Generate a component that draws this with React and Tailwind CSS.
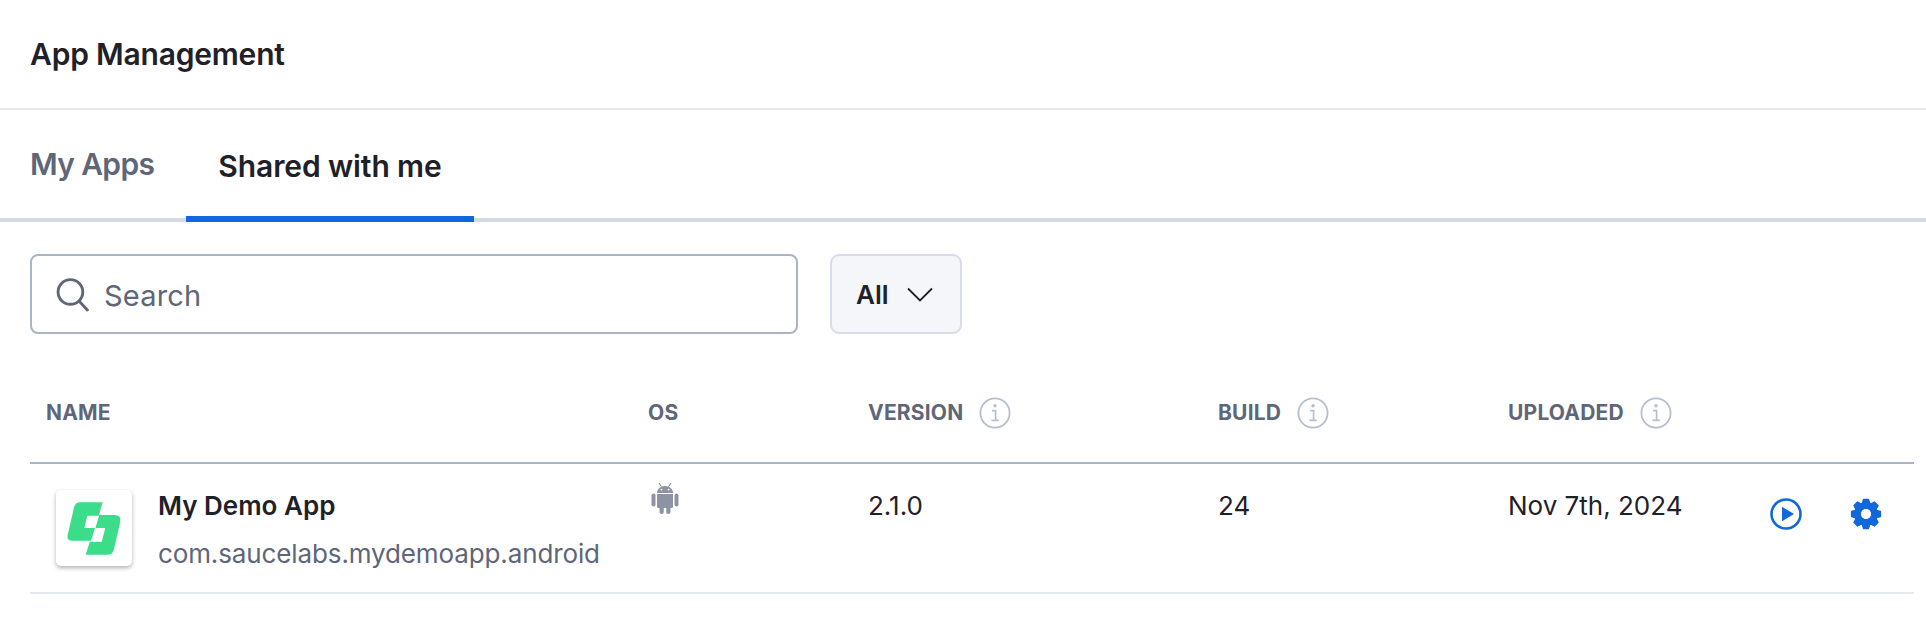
import React from "react";

const cols = "grid grid-cols-[602px_220px_350px_290px_1fr]";

function Info() {
  return (
    <svg width="32" height="32" viewBox="0 0 32 32" fill="none" className="shrink-0">
      <circle cx="16" cy="16" r="14.6" stroke="#b4bfcf" strokeWidth="1.8" />
      <circle cx="16" cy="8.8" r="1.7" fill="#b4bfcf" />
      <path d="M13 13.6h3.6v9.6M12.4 23.4h7.4" stroke="#b4bfcf" strokeWidth="1.7" />
    </svg>
  );
}

function Android() {
  return (
    <svg width="28" height="32" viewBox="0 0 28 32" fill="#8d93a3" className="block">
      <path d="M6 11c0-4 3.6-7 8-7s8 3 8 7z" />
      <path d="M8 1l2.6 4M20 1l-2.6 4" stroke="#8d93a3" strokeWidth="1" />
      <circle cx="10.4" cy="7.6" r="0.9" fill="#fff" />
      <circle cx="17.6" cy="7.6" r="0.9" fill="#fff" />
      <path d="M6 12h16v12.5a1.5 1.5 0 0 1-1.5 1.5h-13A1.5 1.5 0 0 1 6 24.500z" />
      <rect x="0.500" y="11.500" width="4" height="13" rx="2" />
      <rect x="23.500" y="11.500" width="4" height="13" rx="2" />
      <rect x="8.500" y="24" width="4.300" height="8" rx="2.100" />
      <rect x="15.200" y="24" width="4.300" height="8" rx="2.100" />
    </svg>
  );
}

function Logo() {
  return (
    <svg width="76" height="76" viewBox="0 0 76 76" fill="#3bdc8a">
      <path d="M24 12.300H46.700L42.700 25.700H31.300L28.300 38H39L35 50.700H16.500Q10.300 50.700 11.700 45L18 17.500Q19.300 12.300 24 12.300Z" />
      <path d="M43.300 25H58.500Q65.700 25 64.200 32L57.800 60Q56.600 64.700 51.500 64.700H29.700L33.800 51.700H45.700L49.300 38H39.400Z" />
    </svg>
  );
}

function Gear() {
  const teeth = 8;
  const pts = [];
  for (let i = 0; i < teeth; i++) {
    const a = (i / teeth) * Math.PI * 2 - Math.PI / 2;
    const s = 0.17;
    const g = 0.23;
    const p = (r, t) => `${(16 + r * Math.cos(t)).toFixed(2)} ${(16 + r * Math.sin(t)).toFixed(2)}`;
    pts.push(p(11.2, a - g - 0.1), p(14.6, a - s), p(14.6, a + s), p(11.2, a + g + 0.1));
  }
  const d = `M${pts.join("L")}Z M16 10.400a5.600 5.600 0 1 0 0 11.200a5.600 5.600 0 1 0 0-11.200Z`;
  return (
    <svg width="32" height="32" viewBox="0 0 32 32" className="block">
      <path d={d} fill="#1168dd" fillRule="evenodd" stroke="#1168dd" strokeWidth="1.500" strokeLinejoin="round" />
      <circle cx="16" cy="16" r="5" fill="#fff" />
    </svg>
  );
}

function Play() {
  return (
    <svg width="32" height="32" viewBox="0 0 32 32" fill="none" className="block">
      <circle cx="16" cy="16" r="14.500" stroke="#1168dd" strokeWidth="2.600" />
      <path d="M12 8.800L24 16L12 23.200Z" fill="#1168dd" />
    </svg>
  );
}

function Th({ children, info }) {
  return (
    <div className="flex items-center gap-[16px] pl-[16px] h-[32px] text-[21px] tracking-[0.2px] font-bold text-[#5e6678]">
      <span>{children}</span>
      {info && <Info />}
    </div>
  );
}

export default function App() {
  return (
    <div className="h-[643px] w-full bg-white text-[#1f2128] font-['Inter',sans-serif] overflow-hidden">
      <header className="h-[110px] border-b-2 border-[#e5e9f0] flex items-center pl-[30px]">
        <h1 className="text-[30px] font-semibold tracking-[-0.2px]">App Management</h1>
      </header>

      <nav className="flex h-[112px] border-b-[4px] border-[#d4d9e5]">
        <div className="pl-[30px] pr-[32px] flex items-center text-[30px] font-semibold tracking-[-0.65px] text-[#5e6678]">My Apps</div>
        <div className="px-[32px] flex items-center text-[30px] font-semibold tracking-[-0.1px] border-b-[6px] border-t-[6px] border-t-transparent border-[#1168dd] -mb-[4px]">
          Shared with me
        </div>
      </nav>

      <div className="flex gap-[32px] pl-[30px] mt-[32px]">
        <div className="w-[768px] h-[80px] rounded-[8px] border-2 border-[#a9b4c4] flex items-center pl-[24px] gap-[16px]">
          <svg width="33" height="35" viewBox="0 0 32 34" fill="none" stroke="#5e6678" strokeWidth="2.800">
            <circle cx="14" cy="14.500" r="12" />
            <path d="M22.500 23.500L30.500 32" strokeLinecap="round" />
          </svg>
          <span className="text-[29px] tracking-[0.2px] pt-[3px] -ml-[1px] text-[#5e6678]">Search</span>
        </div>
        <div className="w-[132px] h-[80px] rounded-[9px] border-2 border-[#d8dceA] bg-[#f5f6f9] flex items-center pl-[24px] gap-[18px]">
          <span className="text-[26px] font-semibold">All</span>
          <svg width="26" height="15" viewBox="0 0 26 15" fill="none" stroke="#1f2128" strokeWidth="1.800">
            <path d="M1 1.500L13 13.500L25 1.500" />
          </svg>
        </div>
      </div>

      <div className="ml-[30px] mr-[12px]">
        <div className={`${cols} h-[130px] pt-[63px] border-b-2 border-[#a9b4c4]`}>
          <Th>NAME</Th>
          <Th>OS</Th>
          <Th info>VERSION</Th>
          <Th info>BUILD</Th>
          <Th info>UPLOADED</Th>
        </div>
        <div className={`${cols} h-[130px] border-b-2 border-[#e5e7f1] text-[26px]`}>
          <div className="flex pl-[26px] pt-[26px] gap-[26px]">
            <div className="w-[76px] h-[76px] rounded-[5px] bg-white shadow-[0_2px_4px_rgba(30,35,50,0.35)] shrink-0">
              <Logo />
            </div>
            <div>
              <div className="font-semibold leading-[32px]">My Demo App</div>
              <div className="text-[#5e6678] leading-[32px] mt-[16px] tracking-[-0.12px]">com.saucelabs.mydemoapp.android</div>
            </div>
          </div>
          <div className="pl-[19px] pt-[18px]"><Android /></div>
          <div className="pl-[16px] pt-[26px] leading-[32px]">2.1.0</div>
          <div className="pl-[16px] pt-[26px] leading-[32px]">24</div>
          <div className="pl-[16px] flex">
            <span className="leading-[32px] pt-[26px] w-[262px]">Nov 7th, 2024</span>
            <div className="flex gap-[48px] pt-[34px]">
              <Play />
              <Gear />
            </div>
          </div>
        </div>
      </div>
    </div>
  );
}
